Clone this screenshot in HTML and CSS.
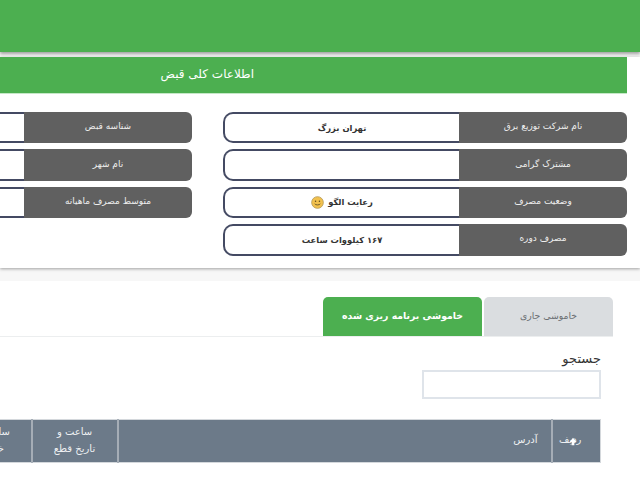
FILE: index.html
```html
<!DOCTYPE html>
<html lang="fa" dir="rtl">
<head>
  <meta charset="UTF-8">
  <title>اطلاعات کلی قبض</title>
  <link rel="stylesheet" href="styles.css">
</head>
<body>
  <header class="topbar"></header>

  <section class="bill-card">
    <h2 class="bill-title">اطلاعات کلی قبض</h2>
    <div class="bill-grid">
      <div class="bill-col">
        <div class="bill-row"><span class="bill-label">نام شرکت توزیع برق</span><span class="bill-value">تهران بزرگ</span></div>
        <div class="bill-row"><span class="bill-label">مشترک گرامی</span><span class="bill-value"></span></div>
        <div class="bill-row"><span class="bill-label">وضعیت مصرف</span><span class="bill-value">رعایت الگو
          <svg class="smiley" viewBox="0 0 14 14" width="13" height="13"><circle cx="7" cy="7" r="6.3" fill="#f2c14e" stroke="#b59a5a" stroke-width="0.9"/><circle cx="4.9" cy="5.6" r="0.8" fill="#5c4a20"/><circle cx="9.1" cy="5.6" r="0.8" fill="#5c4a20"/><path d="M4 8.4c.8 1.6 5.200 1.600 6 0" fill="none" stroke="#5c4a20" stroke-width="0.9"/></svg>
        </span></div>
        <div class="bill-row"><span class="bill-label">مصرف دوره</span><span class="bill-value">۱۶۷ کیلووات ساعت</span></div>
      </div>
      <div class="bill-col">
        <div class="bill-row"><span class="bill-label">شناسه قبض</span><span class="bill-value"></span></div>
        <div class="bill-row"><span class="bill-label">نام شهر</span><span class="bill-value"></span></div>
        <div class="bill-row"><span class="bill-label">متوسط مصرف ماهیانه</span><span class="bill-value"></span></div>
      </div>
    </div>
  </section>

  <section class="outage-card">
    <nav class="tabs">
      <a class="tab">خاموشی جاری</a>
      <a class="tab active">خاموشی برنامه ریزی شده</a>
    </nav>
    <div class="search">
      <label for="search-input">جستجو</label>
      <input id="search-input" type="text">
    </div>
    <table class="outage-table">
      <thead>
        <tr>
          <th class="col-index">ردیف
            <svg class="sort-icon" viewBox="0 0 10 12" width="8" height="9"><path d="M5 1 9.500 6.500H6.800V11H3.200V6.500H.5z" fill="#fff"/></svg>
          </th>
          <th class="col-address">آدرس</th>
          <th class="col-date">ساعت و<br>تاریخ قطع</th>
          <th class="col-end">ساعت و<br>خاتمه</th>
        </tr>
      </thead>
    </table>
  </section>
</body>
</html>
```

FILE: styles.css
```css
* { box-sizing: border-box; }
html, body { height: 100%; }
body { margin: 0; background: #f7f7f7; font-family: "DejaVu Sans", sans-serif; overflow: hidden; }

.topbar { height: 52px; background: #4caf50; box-shadow: 0 2px 3px rgba(0,0,0,0.35); }

.bill-card { margin-top: 5px; height: 211px; background: #fff; padding-right: 13px; box-shadow: 0 1px 3px rgba(0,0,0,0.35); }
.bill-title { margin: 0; height: 37px; line-height: 35px; padding-right: 373px; background: #4caf50; border-bottom: 1px solid #c5e8c7; color: #fff; font-size: 12px; font-weight: normal; white-space: nowrap; }
.bill-grid { display: grid; grid-template-columns: 404px 404px; gap: 31px; padding-top: 18px; }
.bill-col { display: flex; flex-direction: column; gap: 6px; }

.bill-row { display: flex; height: 31.4px; }
.bill-label { width: 168px; flex: none; display: flex; align-items: center; justify-content: center; padding-bottom: 3px; background: #606060; border-radius: 0 6px 6px 0; color: #eee; font-size: 9px; }
.bill-value { flex: 1; display: flex; align-items: center; justify-content: center; gap: 4px; background: #fff; border: 2px solid #444a63; border-right: none; border-radius: 10px 0 0 10px; color: #333; font-size: 8.4px; font-weight: bold; }
.smiley { flex: none; }

.outage-card { margin-top: 13px; height: 199px; background: #fff; padding: 16px 27px 0 0; }
.tabs { display: flex; gap: 2px; height: 40px; border-bottom: 1px solid #eceeef; margin-left: -27px; padding-left: 27px; }
.tab { display: flex; align-items: center; justify-content: center; height: 39px; border-radius: 5px 5px 0 0; font-size: 9.3px; padding-bottom: 3px; }
.tab:first-child { width: 129px; background: #dadde0; color: #6b6f73; }
.tab.active { width: 159px; background: #4caf50; color: #fff; font-weight: bold; }

.search { display: flex; flex-direction: column; align-items: flex-start; margin: 11px 12px 0 0; }
.search label { font-size: 13px; line-height: 22px; color: #333; }
.search input { width: 179px; height: 29px; background: #fff; border: 2px solid #dfe4ea; }

.outage-table { margin: 20px 12px 0 0; width: 647px; table-layout: fixed; border-collapse: collapse; }
.outage-table th { height: 43px; padding: 0 0 3px; background: #6c7a89; border: 1px solid #d4d8dc; color: #eef0f2; font-size: 10px; font-weight: normal; line-height: 17px; }
.outage-table th + th { border-right: 2px solid #a5adb6; }
.col-index { width: 49px; position: relative; }
.outage-table .col-index { padding-right: 12px; }
.outage-table .col-address { width: 434px; padding-right: 13px; text-align: right; }
.col-date { width: 86px; }
.col-end { width: 78px; }
.sort-icon { position: absolute; left: 16px; top: 17px; }
```
